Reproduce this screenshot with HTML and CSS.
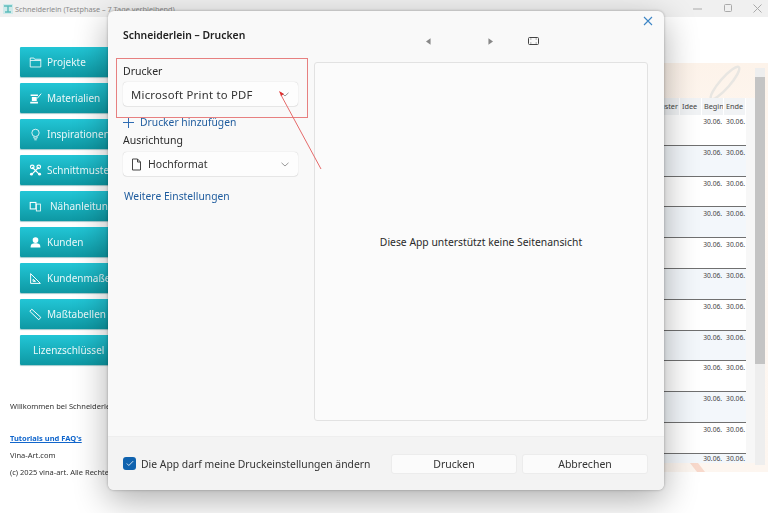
FILE: index.html
```html
<!DOCTYPE html>
<html lang="de">
<head>
<meta charset="utf-8">
<title>Schneiderlein</title>
<link rel="stylesheet" href="styles.css">
</head>
<body>
<div class="app">
  <header class="titlebar">
    <svg class="app-icon" width="12" height="12" viewBox="0 0 12 12"><rect x="1" y="1" width="10" height="10" fill="#cfeaea"/><path d="M2 3h8M3 9h6M6 3v6" stroke="#5dbcbc" stroke-width="1.500" fill="none"/></svg>
    <span class="app-title">Schneiderlein (Testphase – 7 Tage verbleibend)</span>
    <div class="win-controls">
      <svg width="12" height="12" viewBox="0 0 12 12"><path d="M1 6h9" stroke="#aaa"/></svg>
      <svg width="12" height="12" viewBox="0 0 12 12"><rect x="2.500" y="1.500" width="7" height="7" rx="1" fill="none" stroke="#aaa"/></svg>
      <svg width="12" height="12" viewBox="0 0 12 12"><path d="M1.500 1.500l8 8M9.500 1.500l-8 8" stroke="#aaa"/></svg>
    </div>
  </header>
  <main class="workspace">
    <aside class="sidebar">
      <nav class="nav">
        <a class="nav-btn"><svg class="nav-icon" viewBox="0 0 16 16"><path d="M1.500 2.500h4.500l1 1.500h7.500v9.500h-13z M1.500 5.500h13" fill="none" stroke="#fff"/></svg><span>Projekte</span></a>
        <a class="nav-btn"><svg class="nav-icon" viewBox="0 0 16 16"><path d="M2 3h9v2H2zM3.500 6h6v5h-6zM1.500 12h9.500v2H1.500z" fill="#fff"/><path d="M15 2L10 8" stroke="#fff" stroke-width="1.200"/></svg><span>Materialien</span></a>
        <a class="nav-btn"><svg class="nav-icon" viewBox="0 0 16 16"><circle cx="8" cy="6" r="4.500" fill="none" stroke="#fff"/><path d="M6 10.500v2h4v-2M6.500 14.500h3" fill="none" stroke="#fff"/></svg><span>Inspirationen</span></a>
        <a class="nav-btn"><svg class="nav-icon" viewBox="0 0 16 16"><path d="M3 13L12 4M13 13L4 4" stroke="#fff" stroke-width="1.500"/><circle cx="4" cy="3.500" r="2.200" fill="none" stroke="#fff" stroke-width="1.500"/><circle cx="12" cy="3.500" r="2.200" fill="none" stroke="#fff" stroke-width="1.500"/><circle cx="3" cy="12.500" r="1.800" fill="#fff"/><circle cx="13" cy="12.500" r="1.800" fill="#fff"/></svg><span>Schnittmuster</span></a>
        <a class="nav-btn nav-btn-wide"><svg class="nav-icon" viewBox="0 0 16 16"><rect x="1.500" y="3" width="7" height="8" fill="none" stroke="#fff" stroke-width="1.300"/><rect x="9" y="5" width="5" height="8.500" fill="none" stroke="#fff"/></svg><span>Nähanleitungen</span></a>
        <a class="nav-btn"><svg class="nav-icon" viewBox="0 0 16 16"><circle cx="8" cy="5" r="3.500" fill="#fff"/><path d="M2 14c0-4 2-5 6-5s6 1 6 5z" fill="#fff"/></svg><span>Kunden</span></a>
        <a class="nav-btn"><svg class="nav-icon" viewBox="0 0 16 16"><path d="M2 2v12h12zM5 9v2.500h3z" fill="none" stroke="#fff" stroke-width="1.200"/></svg><span>Kundenmaße</span></a>
        <a class="nav-btn"><svg class="nav-icon" viewBox="0 0 16 16"><path d="M3.500 1.500l11 10-2.500 3-11-10.500z" fill="none" stroke="#fff" stroke-width="1.200"/></svg><span>Maßtabellen</span></a>
        <a class="nav-btn nav-btn-text"><span>Lizenzschlüssel</span></a>
      </nav>
      <div class="info">
        <p class="welcome">Willkommen bei Schneiderlein</p>
        <p class="tutorials"><a>Tutorials und FAQ's</a></p>
        <p class="site">Vina-Art.com</p>
        <p class="copy">(c) 2025 vina-art. Alle Rechte vorbehalten</p>
      </div>
    </aside>
    <section class="panel">
      <div class="grid-wrap">
        <svg class="deco" width="104" height="409" viewBox="0 0 104 409"><ellipse cx="61" cy="20" rx="5" ry="21" transform="rotate(41 61 20)" fill="none" stroke="#e8e6e2" stroke-width="2.500"/><path d="M26 400l7 9h8l-7-9z" fill="#f8d9cc"/></svg>
        <div class="grid">
          <div class="grid-head"><span class="col-m">uster</span><span>Idee</span><span>Begin</span><span>Ende</span></div>
          <div class="grid-row"><span>30.06.</span><span>30.06.</span></div>
          <div class="grid-row alt"><span>30.06.</span><span>30.06.</span></div>
          <div class="grid-row"><span>30.06.</span><span>30.06.</span></div>
          <div class="grid-row alt"><span>30.06.</span><span>30.06.</span></div>
          <div class="grid-row"><span>30.06.</span><span>30.06.</span></div>
          <div class="grid-row alt"><span>30.06.</span><span>30.06.</span></div>
          <div class="grid-row"><span>30.06.</span><span>30.06.</span></div>
          <div class="grid-row alt"><span>30.06.</span><span>30.06.</span></div>
          <div class="grid-row"><span>30.06.</span><span>30.06.</span></div>
          <div class="grid-row alt"><span>30.06.</span><span>30.06.</span></div>
          <div class="grid-row"><span>30.06.</span><span>30.06.</span></div>
          <div class="grid-row alt last"><span>30.06.</span><span>30.06.</span></div>
        </div>
        <div class="inner-scroll"></div>
        <div class="outer-scroll"><div class="thumb"></div></div>
      </div>
    </section>
  </main>
</div>

<div class="dialog">
  <div class="dialog-body">
    <div class="settings">
      <h1 class="dialog-title">Schneiderlein – Drucken</h1>
      <label class="field-label first">Drucker</label>
      <div class="select printer"><span>Microsoft Print to PDF</span><svg class="chev" width="8" height="5" viewBox="0 0 8 5"><path d="M.5.800L4 4l3.500-3.200" fill="none" stroke="#999"/></svg></div>
      <a class="link add"><svg width="11" height="11" viewBox="0 0 11 11"><path d="M5.500 0v11M0 5.500h11" stroke="#2f6cb3"/></svg>Drucker hinzufügen</a>
      <label class="field-label orient">Ausrichtung</label>
      <div class="select"><svg class="doc" width="11" height="13" viewBox="0 0 11 13"><path d="M1.500 1h5l3 3v8h-8zM6.500 1v3h3" fill="none" stroke="#444"/></svg><span>Hochformat</span><svg class="chev" width="8" height="5" viewBox="0 0 8 5"><path d="M.5.800L4 4l3.500-3.200" fill="none" stroke="#999"/></svg></div>
      <a class="link more">Weitere Einstellungen</a>
    </div>
    <div class="preview-col">
      <div class="preview-nav">
        <svg width="5" height="7" viewBox="0 0 6 8"><path d="M5.500 0v8L0 4z" fill="#888"/></svg>
        <svg width="5" height="7" viewBox="0 0 6 8"><path d="M.5 0v8L6 4z" fill="#888"/></svg>
        <svg class="fit" width="11" height="8" viewBox="0 0 11 8"><rect x=".5" y=".5" width="10" height="7" rx="1" fill="none" stroke="#444"/><path d="M2 2h1.500M7.500 2H9M2 6h1.500M7.500 6H9" stroke="#999"/></svg>
      </div>
      <div class="preview">Diese App unterstützt keine Seitenansicht</div>
    </div>
    <svg class="close" width="10" height="10" viewBox="0 0 10 10"><path d="M1 1l8 8M9 1L1 9" stroke="#3d86c6" stroke-width="1.100"/></svg>
  </div>
  <footer class="dialog-foot">
    <span class="check"><svg viewBox="0 0 10 8"><path d="M1 4l2.500 2.500L9 1" fill="none" stroke="#fff"/></svg></span>
    <span class="check-label">Die App darf meine Druckeinstellungen ändern</span>
    <button class="btn btn-print">Drucken</button>
    <button class="btn">Abbrechen</button>
  </footer>
</div>

<div class="markup-box"></div>
<svg class="markup-arrow" width="60" height="90" viewBox="0 0 60 90"><path d="M43 80L3 6" stroke="#e56a6a" fill="none"/><path d="M1 2l5 3-3 2z" fill="#e03030"/></svg>
</body>
</html>
```
FILE: styles.css
```css
* { box-sizing: border-box; }
html, body { margin: 0; height: 100%; }
body {
  width: 768px;
  height: 513px;
  overflow: hidden;
  background: #fff;
  font-family: "Noto Sans", "Open Sans", sans-serif;
  color: #222;
  position: relative;
  filter: blur(.3px);
}
.app { display: flex; flex-direction: column; height: 513px; }
.titlebar {
  height: 17px;
  background: #f0f0f0;
  display: flex;
  align-items: center;
  padding-left: 2px;
  font-size: 7.300px;
  color: #8a8a8a;
  flex: none;
}
.app-icon { margin-right: 1px; }
.app-title { white-space: nowrap; }
.win-controls { margin-left: auto; display: flex; gap: 18px; padding-right: 4px; }
.workspace { display: flex; flex: 1; min-height: 0; }
.sidebar { width: 664px; flex: none; padding: 30px 0 0 10px; overflow: hidden; }
.nav { display: flex; flex-direction: column; gap: 6px; padding-left: 10px; }
.nav-btn {
  width: 100px;
  height: 30px;
  display: flex;
  align-items: center;
  gap: 5px;
  padding-left: 9px;
  color: #e9f8f9;
  font-size: 10px;
  white-space: nowrap;
  background: linear-gradient(#22c6d6, #0e98a3);
  box-shadow: 0 1px 1px #9fc9cc;
  border-radius: 1px;
}
.nav-btn-wide { gap: 8px; }
.nav-btn-text { padding-left: 13px; }
.nav-icon { width: 13px; height: 13px; flex: none; }
.info { margin-top: 36px; font-size: 7.500px; line-height: 11px; color: #333; }
.info p { margin: 0; white-space: nowrap; }
.info .tutorials { margin-top: 21px; font-weight: 700; font-size: 7.500px; }
.tutorials a { color: #1166cc; text-decoration: underline; }
.info .site { margin-top: 6px; }
.info .copy { margin-top: 6px; }
.panel { flex: 1; padding-top: 46px; min-width: 0; }
.grid-wrap {
  height: 409px;
  position: relative;
  overflow: hidden;
  padding-top: 35px;
  background: linear-gradient(#fdf3ea, #fff8f2 25%, #fdf6f0);
  display: flex;
}
.deco { position: absolute; left: 0; top: 0; }
.grid {
  position: relative;
  width: 82px;
  height: 365px;
  font-size: 6.700px;
  line-height: 9px;
  color: #444;
  flex: none;
}
.grid-head {
  height: 17px;
  display: grid;
  grid-template-columns: 16px 22px 22px 22px;
  background: #f1f3f5;
  font-size: 7.300px;
}
.grid-head span {
  display: block;
  overflow: hidden;
  padding: 4px 0 0 2px;
  white-space: nowrap;
  border-right: 1px solid #fff;
}
.grid-head .col-m {
  display: flex;
  justify-content: flex-end;
  overflow: visible;
  padding: 4px 1px 0 0;
}
.grid-row {
  height: 30.800px;
  background: #fff;
  display: flex;
  justify-content: flex-end;
  gap: 4px;
  padding: 2px 1px 0 0;
  border-bottom: 1px solid #707070;
}
.grid-row.alt { background: #f3f7fb; }
.grid-row.last { height: 9.200px; padding-top: 0; border-bottom: 0; }
.inner-scroll { position: relative; width: 9px; height: 365px; background: #f7f7f7; flex: none; }
.outer-scroll {
  position: relative;
  width: 10px;
  height: 397px;
  margin-top: -30px;
  background: #eee;
  flex: none;
}
.thumb { position: relative; top: 9px; height: 287px; background: #c4c4c4; }

.dialog {
  position: absolute;
  left: 108px;
  top: 11px;
  width: 556px;
  height: 479px;
  border-radius: 6px;
  background: #f9f9f9;
  box-shadow: 0 0 3px rgba(0,0,0,.3), 0 10px 34px rgba(0,0,0,.32);
  display: flex;
  flex-direction: column;
  overflow: hidden;
}
.dialog-body { flex: 1; display: flex; padding: 0 16px 15px 15px; position: relative; min-height: 0; }
.settings { width: 175px; flex: none; }
.dialog-title { margin: 16px 0 0; font-size: 10.400px; font-weight: 600; color: #222; line-height: 16px; }
.field-label { display: block; font-size: 10.500px; line-height: 16px; color: #2a2a2a; }
.field-label.first { margin-top: 20px; }
.orient { margin-top: 2px; }
.select {
  height: 24px;
  margin-top: 3px;
  background: #fdfdfd;
  border-radius: 4px;
  box-shadow: 0 0 1px rgba(0,0,0,.25), 0 1px 0 rgba(0,0,0,.05);
  display: flex;
  align-items: center;
  padding: 0 9px 0 8px;
  font-size: 10.500px;
  color: #333;
}
.orient + .select { margin-top: 4px; }
.printer { font-size: 11.300px; letter-spacing: .25px; }
.chev { margin-left: auto; }
.doc { margin-right: 6px; }
.link { display: flex; align-items: center; color: #1f5c9e; font-size: 10.300px; line-height: 16px; }
.add { gap: 6px; margin-top: 8px; }
.more { margin-top: 12px; padding-left: 1px; }
.preview-col { flex: 1; display: flex; flex-direction: column; margin-left: 16px; }
.preview-nav {
  height: 51px;
  padding-top: 27px;
  display: flex;
  align-items: flex-start;
  padding-left: 112px;
  gap: 57px;
}
.fit { margin-left: -22px; margin-top: -1px; }
.preview {
  flex: 1;
  background: #fbfbfb;
  border: 1px solid #e2e2e2;
  border-radius: 3px;
  display: flex;
  align-items: center;
  justify-content: center;
  font-size: 10.350px;
  color: #2a2a2a;
}
.close { position: absolute; right: 11px; top: 5px; }
.dialog-foot {
  height: 54px;
  flex: none;
  background: #f3f3f3;
  border-top: 1px solid #eee;
  display: flex;
  align-items: center;
  padding: 0 16px 0 15px;
}
.check {
  width: 13px;
  height: 13px;
  border-radius: 3px;
  background: #0f62ae;
  display: flex;
  align-items: center;
  justify-content: center;
  margin-right: 5px;
  flex: none;
}
.check svg { width: 8px; height: 7px; }
.check-label { font-size: 10.370px; color: #333; white-space: nowrap; }
.btn {
  width: 126px;
  height: 20px;
  margin-left: 5px;
  background: #fbfbfb;
  border: 1px solid #ececec;
  border-radius: 3px;
  font: inherit;
  font-size: 10.500px;
  color: #333;
  padding: 0;
}
.btn-print { margin-left: auto; }
.markup-box {
  position: absolute;
  left: 116px;
  top: 58px;
  width: 192px;
  height: 60px;
  border: 1px solid #e78080;
}
.markup-arrow { position: absolute; left: 278px; top: 89px; }
```
